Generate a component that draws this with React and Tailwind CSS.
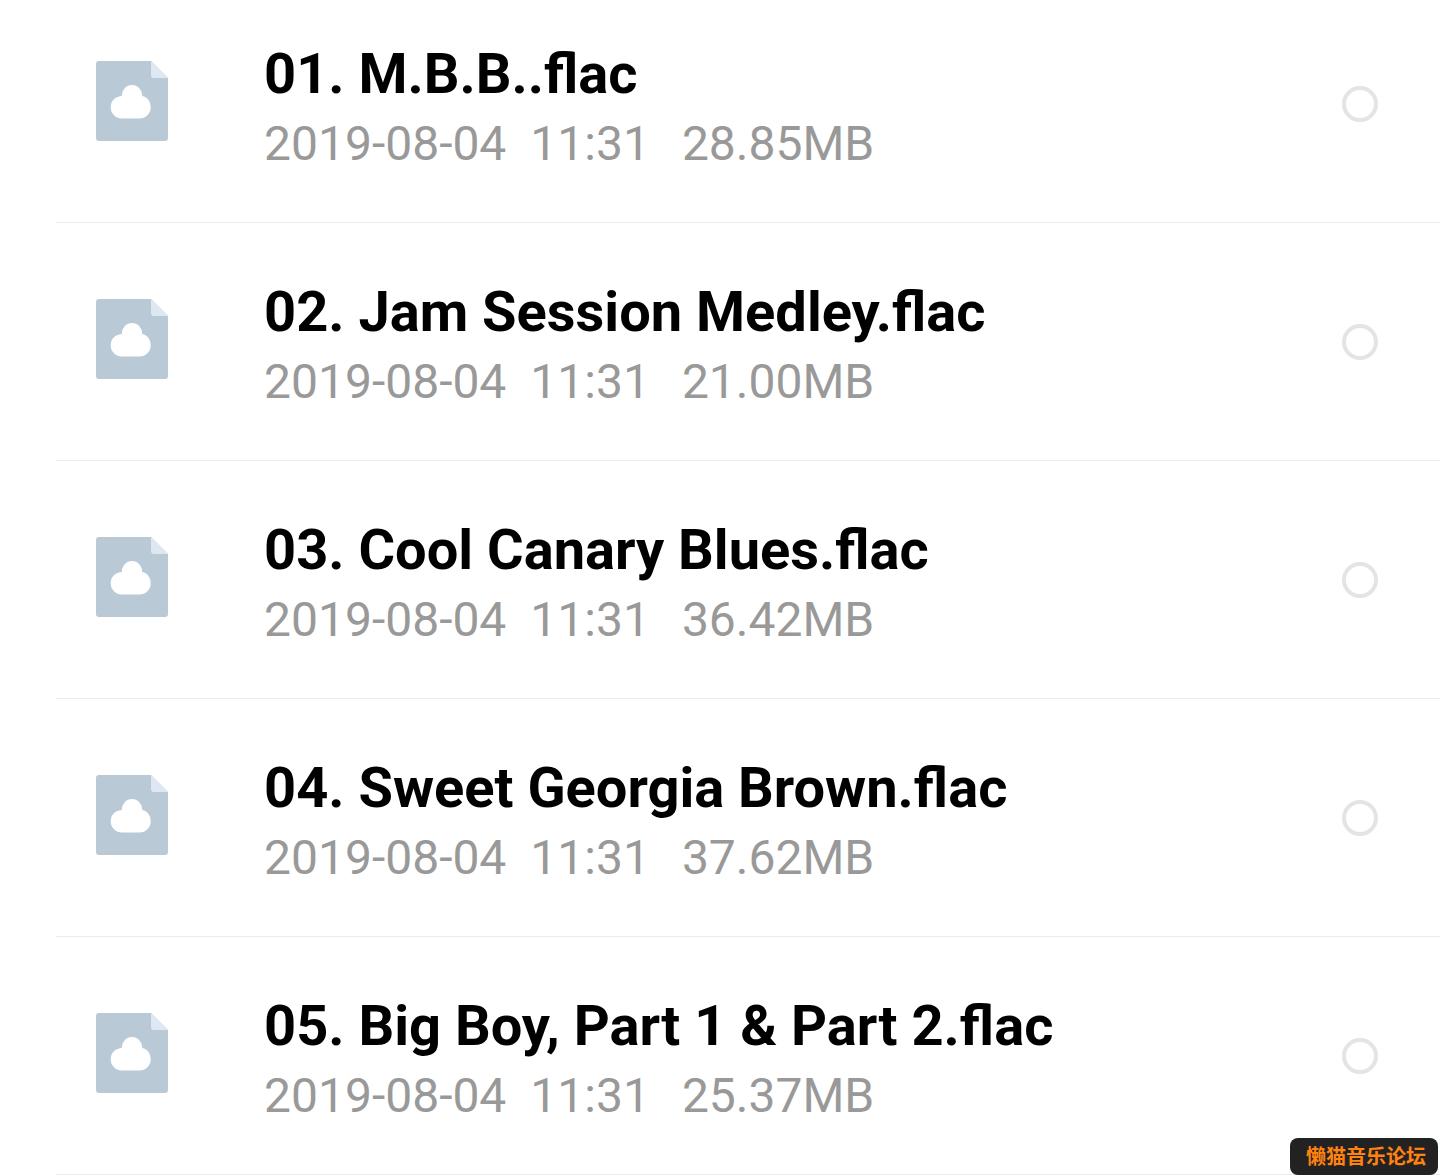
import { useState } from 'react';

const files = [
  { id: 1, name: '01. M.B.B..flac', date: '2019-08-04', time: '11:31', size: '28.85MB' },
  { id: 2, name: '02. Jam Session Medley.flac', date: '2019-08-04', time: '11:31', size: '21.00MB' },
  { id: 3, name: '03. Cool Canary Blues.flac', date: '2019-08-04', time: '11:31', size: '36.42MB' },
  { id: 4, name: '04. Sweet Georgia Brown.flac', date: '2019-08-04', time: '11:31', size: '37.62MB' },
  { id: 5, name: '05. Big Boy, Part 1 & Part 2.flac', date: '2019-08-04', time: '11:31', size: '25.37MB' },
];

function FileIcon() {
  return (
    <svg viewBox="0 0 72 80" className="mt-[23px] h-20 w-[72px] shrink-0" aria-hidden="true">
      <path d="M3 0H55L72 17V77a3 3 0 0 1-3 3H3a3 3 0 0 1-3-3V3a3 3 0 0 1 3-3z" fill="#bac9d6" />
      <path d="M55 0L72 17H58a3 3 0 0 1-3-3z" fill="#dde8f2" />
      <path
        d="M26 57.500a11.300 11.300 0 0 1-11.300-11.300C14.700 40.500 18.500 35.500 25.700 35a10.300 11 0 0 1 20.600 0C51 35.500 54.700 40.500 54.700 46.200A11.300 11.300 0 0 1 43.400 57.500z"
        fill="#fff"
      />
    </svg>
  );
}

function FileRow({ file, checked, onToggle }) {
  const inputId = `file-${file.id}`;

  return (
    <li className="flex items-start border-b border-[#ebebeb] pt-[53px] pr-[62px] pb-11 pl-10 first:pt-[38px]">
      <FileIcon />
      <label htmlFor={inputId} className="ml-24 min-w-0 flex-1">
        <span className="block truncate text-[56px] leading-[72px] font-bold text-black">{file.name}</span>
        <span className="flex text-[48px] leading-[68px] text-[#999999]">
          <span>{file.date}</span>
          <span className="ml-6">{file.time}</span>
          <span className="ml-8">{file.size}</span>
        </span>
      </label>
      <input
        id={inputId}
        type="checkbox"
        checked={checked}
        onChange={() => onToggle(file.id)}
        className="mt-12 size-9 shrink-0 appearance-none rounded-full border-4 border-[#e4e4e4] checked:bg-blue-500"
      />
    </li>
  );
}

function App() {
  const [selected, setSelected] = useState([]);

  const toggle = (id) => {
    setSelected((prev) => (prev.includes(id) ? prev.filter((item) => item !== id) : [...prev, id]));
  };

  return (
    <div className="min-h-screen bg-white font-[Roboto,sans-serif]">
      <ul className="ml-14">
        {files.map((file) => (
          <FileRow key={file.id} file={file} checked={selected.includes(file.id)} onToggle={toggle} />
        ))}
      </ul>

      {/* Forum badge */}
      <div className="fixed right-0.5 bottom-px rounded-lg bg-[#222222] pr-3 pl-4 pt-[5px] pb-[7px] font-['Noto_Sans_CJK_SC',sans-serif] text-[20px] leading-[25px] font-bold text-[#ff8211]">
        懒猫音乐论坛
      </div>
    </div>
  );
}

export default App;
